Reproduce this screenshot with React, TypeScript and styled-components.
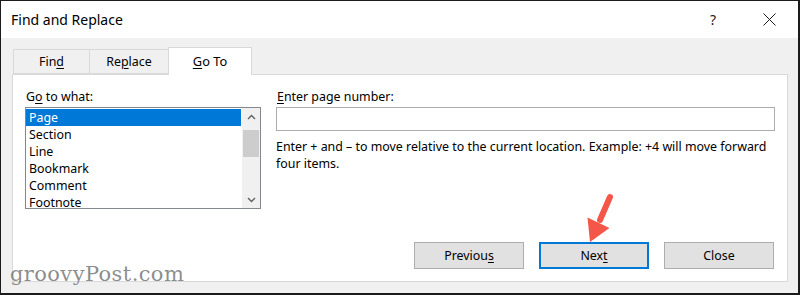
import React from 'react';
import styled, { createGlobalStyle } from 'styled-components';

const GlobalStyle = createGlobalStyle`
  html, body {
    margin: 0;
    padding: 0;
    background: #ffffff;
  }
  * {
    box-sizing: border-box;
  }
`;

const uiFont = `"Noto Sans", "Open Sans", sans-serif`;

const Window = styled.div`
  position: relative;
  width: 800px;
  height: 295px;
  border-style: solid;
  border-color: #1b1b1b;
  border-width: 1px 2px 2px 1px;
  background: #f0f0f0;
  font-family: ${uiFont};
  color: #000;
  overflow: hidden;
  display: flex;
  flex-direction: column;
`;

const TitleBar = styled.div`
  height: 37px;
  background: #ffffff;
  display: flex;
  align-items: center;
  padding: 0 6px 0 10px;
  flex-shrink: 0;
`;

const Title = styled.div`
  flex: 1;
  font-size: 14px;
  padding-bottom: 1px;
`;

const TitleButton = styled.div<{ $w: number }>`
  width: ${(p) => p.$w}px;
  height: 37px;
  display: flex;
  align-items: center;
  justify-content: center;
  font-size: 14px;
  color: #1b1b1b;
`;

const Body = styled.div`
  flex: 1;
  padding: 9px 10px 11px 11px;
  display: flex;
  flex-direction: column;
`;

const TabRow = styled.div`
  display: flex;
  height: 27px;
  padding-left: 1px;
  position: relative;
  z-index: 1;
`;

const Tab = styled.div<{ $active?: boolean; $w: number }>`
  width: ${(p) => p.$w}px;
  height: ${(p) => (p.$active ? 28 : 25)}px;
  margin-top: ${(p) => (p.$active ? 0 : 2)}px;
  background: ${(p) => (p.$active ? '#ffffff' : '#f0f0f0')};
  border: 1px solid #d9d9d9;
  border-bottom: ${(p) => (p.$active ? 'none' : '1px solid #d9d9d9')};
  margin-left: -1px;
  display: flex;
  align-items: center;
  justify-content: center;
  font-size: ${(p) => (p.$active ? 12.8 : 12.4)}px;
  padding-bottom: ${(p) => (p.$active ? 2 : 0)}px;
  &:first-child {
    margin-left: 0;
  }
`;

const Panel = styled.div`
  height: 208px;
  background: #ffffff;
  border: 1px solid #d9d9d9;
  padding: 14px 12px 12px 12px;
  display: flex;
  flex-direction: column;
`;

const TopArea = styled.div`
  display: grid;
  grid-template-columns: 236px 1fr;
  column-gap: 15px;
`;

const Column = styled.div`
  display: flex;
  flex-direction: column;
`;

const Label = styled.div`
  font-size: 12.4px;
  line-height: 16px;
  height: 18px;
  padding-left: 1px;
`;

const U = styled.span`
  text-decoration: underline;
  text-underline-offset: 2px;
`;

const ListBox = styled.div`
  height: 102px;
  border: 1px solid #828790;
  display: flex;
`;

const Items = styled.div`
  flex: 1;
  padding: 1px 1px 0 0;
`;

const Item = styled.div<{ $selected?: boolean }>`
  height: 17px;
  line-height: 17px;
  padding-left: 3px;
  font-size: 12.4px;
  background: ${(p) => (p.$selected ? '#0078d7' : 'transparent')};
  color: ${(p) => (p.$selected ? '#ffffff' : '#000000')};
  &:last-child {
    height: 15px;
  }
`;

const ScrollBar = styled.div`
  width: 18px;
  background: #f0f0f0;
  display: flex;
  flex-direction: column;
`;

const ScrollArrow = styled.div`
  height: 17px;
  display: flex;
  align-items: center;
  justify-content: center;
`;

const Track = styled.div`
  flex: 1;
  padding: 5px 1px 0 1px;
`;

const Thumb = styled.div`
  height: 27px;
  background: #cdcdcd;
`;

const TextInput = styled.div`
  height: 24px;
  border: 1px solid #adadad;
  background: #ffffff;
`;

const Help = styled.p`
  margin: 7px 0 0 0;
  font-size: 12.4px;
  line-height: 17px;
`;

const ButtonRow = styled.div`
  margin-top: auto;
  display: flex;
  justify-content: flex-end;
  gap: 15px;
  padding-right: 1px;
`;

const Button = styled.div<{ $default?: boolean }>`
  width: 110px;
  height: 27px;
  background: #e1e1e1;
  border: ${(p) => (p.$default ? '2px solid #0078d7' : '1px solid #adadad')};
  display: flex;
  align-items: center;
  justify-content: center;
  font-size: 12.4px;
`;

const Watermark = styled.div`
  position: absolute;
  left: 9px;
  top: 261px;
  font-family: "DejaVu Serif", "Liberation Serif", serif;
  font-size: 21px;
  color: rgba(120, 120, 120, 0.85);
  letter-spacing: 0.4px;
  pointer-events: none;
`;

const Pointer = styled.svg`
  position: absolute;
  left: 580px;
  top: 190px;
  pointer-events: none;
`;

const Chevron: React.FC<{ up?: boolean }> = ({ up }) => (
  <svg width="9" height="6" viewBox="0 0 9 6">
    <polyline
      points={up ? '1,5 4.5,1.5 8,5' : '1,1 4.5,4.5 8,1'}
      fill="none"
      stroke="#606060"
      strokeWidth="1.4"
    />
  </svg>
);

const items = ['Page', 'Section', 'Line', 'Bookmark', 'Comment', 'Footnote'];

const App: React.FC = () => (
  <>
    <GlobalStyle />
    <Window>
      <TitleBar>
        <Title>Find and Replace</Title>
        <TitleButton $w={66}>?</TitleButton>
        <TitleButton $w={46}>
          <svg width="13" height="13" viewBox="0 0 13 13">
            <path d="M0.5 0.5 L12.5 12.5 M12.5 0.5 L0.5 12.5" stroke="#1b1b1b" strokeWidth="1" />
          </svg>
        </TitleButton>
      </TitleBar>
      <Body>
        <TabRow>
          <Tab $w={77}>
            Fin<U>d</U>
          </Tab>
          <Tab $w={80}>
            Re<U>p</U>lace
          </Tab>
          <Tab $w={84} $active>
            <U>G</U>o To
          </Tab>
        </TabRow>
        <Panel>
          <TopArea>
            <Column>
              <Label>
                G<U>o</U> to what:
              </Label>
              <ListBox>
                <Items>
                  {items.map((it, i) => (
                    <Item key={it} $selected={i === 0}>
                      {it}
                    </Item>
                  ))}
                </Items>
                <ScrollBar>
                  <ScrollArrow>
                    <Chevron up />
                  </ScrollArrow>
                  <Track>
                    <Thumb />
                  </Track>
                  <ScrollArrow>
                    <Chevron />
                  </ScrollArrow>
                </ScrollBar>
              </ListBox>
            </Column>
            <Column>
              <Label>
                <U>E</U>nter page number:
              </Label>
              <TextInput />
              <Help>
                Enter + and – to move relative to the current location. Example: +4 will move forward
                four items.
              </Help>
            </Column>
          </TopArea>
          <ButtonRow>
            <Button>
              Previou<U>s</U>
            </Button>
            <Button $default>
              Nex<U>t</U>
            </Button>
            <Button>Close</Button>
          </ButtonRow>
        </Panel>
      </Body>
      <Watermark>groovyPost.com</Watermark>
      <Pointer width="40" height="56" viewBox="580 190 40 56">
        <line x1="609" y1="196" x2="599" y2="219" stroke="#f4564a" strokeWidth="6" strokeLinecap="round" />
        <polygon points="589,241 586.5,216.5 608.5,227" fill="#f4564a" />
      </Pointer>
    </Window>
  </>
);

export default App;
